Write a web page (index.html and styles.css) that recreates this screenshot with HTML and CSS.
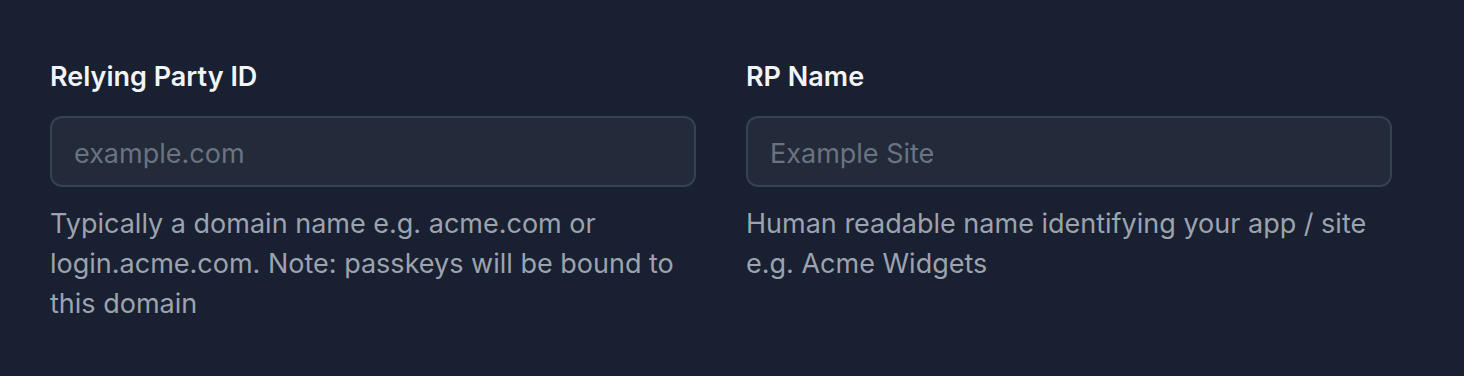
FILE: index.html
```html
<!DOCTYPE html>
<html lang="en">
<head>
    <meta charset="UTF-8">
    <meta name="viewport" content="width=device-width, initial-scale=1.0">
    <title>Passkey settings</title>
    <link rel="stylesheet" href="styles.css">
</head>
<body>
    <div class="settings">
        <div class="field">
            <label class="field-label" for="rpId">Relying Party ID</label>
            <input class="field-input" id="rpId" type="text" placeholder="example.com">
            <p class="field-help">Typically a domain name e.g. acme.com or login.acme.com. Note: passkeys will be bound to this domain</p>
        </div>
        <div class="field">
            <label class="field-label" for="rpName">RP Name</label>
            <input class="field-input" id="rpName" type="text" placeholder="Example Site">
            <p class="field-help">Human readable name identifying your app / site e.g. Acme Widgets</p>
        </div>
    </div>
</body>
</html>
```

FILE: styles.css
```css
/* General */
body {
    margin: 0;
    padding: 0;
    background-color: #182031;
    font-family: Inter, "Noto Sans", sans-serif;
    color: #f3f4f6;
}

/* Two column form */
.settings {
    display: grid;
    grid-template-columns: 646px 646px;
    column-gap: 50px;
    padding: 57px 72px 40px 50px;
}

.field {
    display: flex;
    flex-direction: column;
}

.field-label {
    font-size: 27px;
    font-weight: 600;
    line-height: 40px;
    color: #f3f4f6;
}

.field-input {
    margin-top: 19px;
    height: 71px;
    box-sizing: border-box;
    padding: 3px 22px 0;
    background-color: #232a3a;
    border: 2px solid #374151;
    border-radius: 12px;
    font-family: inherit;
    font-size: 27px;
    color: #f3f4f6;
    outline: none;
}

.field-input::placeholder {
    color: #6b7280;
}

.field-help {
    margin: 17px 0 0;
    font-size: 27px;
    line-height: 40px;
    color: #9ca3af;
}
```
